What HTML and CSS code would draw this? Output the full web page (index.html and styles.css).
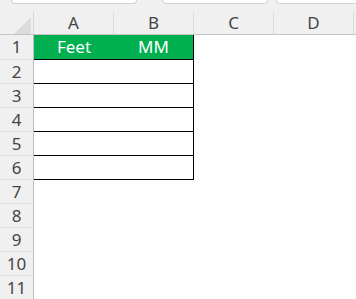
FILE: index.html
```html
<!DOCTYPE html>
<html>
<head>
<meta charset="utf-8">
<link rel="stylesheet" href="styles.css">
</head>
<body>
<div class="tabs">
  <div class="tab t1"></div>
  <div class="tab t2"></div>
  <div class="tab t3"></div>
</div>
<div class="sheet">
  <div class="corner"><span class="tri"></span></div>
  <div class="ch">A</div>
  <div class="ch">B</div>
  <div class="ch">C</div>
  <div class="ch">D</div>
  <div class="ch end"></div>

  <div class="rh r1">1</div>
  <div class="c hd">Feet</div>
  <div class="c hd right">MM</div>
  <div class="c blank span3"></div>

  <div class="rh">2</div><div class="c tb"></div><div class="c tb right"></div><div class="c blank span3"></div>
  <div class="rh">3</div><div class="c tb"></div><div class="c tb right"></div><div class="c blank span3"></div>
  <div class="rh">4</div><div class="c tb"></div><div class="c tb right"></div><div class="c blank span3"></div>
  <div class="rh">5</div><div class="c tb"></div><div class="c tb right"></div><div class="c blank span3"></div>
  <div class="rh">6</div><div class="c tb"></div><div class="c tb right"></div><div class="c blank span3"></div>
  <div class="rh">7</div><div class="c blank span5"></div>
  <div class="rh">8</div><div class="c blank span5"></div>
  <div class="rh">9</div><div class="c blank span5"></div>
  <div class="rh">10</div><div class="c blank span5"></div>
  <div class="rh">11</div><div class="c blank span5"></div>
</div>
</body>
</html>
```
FILE: styles.css
```css
html, body {
  margin: 0;
  padding: 0;
  background: #ffffff;
  width: 356px;
  height: 299px;
  overflow: hidden;
  font-family: "Noto Sans", "Open Sans", sans-serif;
}
.tabs {
  height: 12px;
  background: #f0f0f0;
  display: flex;
  align-items: flex-start;
}
.tab {
  box-sizing: border-box;
  height: 4px;
  background: #ffffff;
  border: 1px solid #d2d2d2;
  border-top: none;
  border-radius: 0 0 5px 5px;
}
.t1 { margin-left: 11px; width: 126px; }
.t2 { margin-left: 25px; width: 106px; }
.t3 { margin-left: 8px; flex: 1; margin-right: -6px; }

.sheet {
  display: grid;
  grid-template-columns: 34px 80px 80px 80px 80px 1fr;
  grid-template-rows: 23px 25px repeat(10, 24px);
}
.corner {
  box-sizing: border-box;
  background: #f0f0f0;
  border-right: 1px solid #d6d6d6;
  border-bottom: 1px solid #c4c4c4;
  position: relative;
}
.tri {
  position: absolute;
  left: 14px;
  top: 5px;
  width: 0;
  height: 0;
  border-left: 17px solid transparent;
  border-bottom: 17px solid #dcdcdc;
}
.ch {
  box-sizing: border-box;
  background: #f0f0f0;
  border-right: 1px solid #dadada;
  border-bottom: 1px solid #c4c4c4;
  color: #444444;
  font-size: 17px;
  line-height: 22px;
  text-align: center;
}
.ch.end { border-right: none; }
.rh {
  box-sizing: border-box;
  background: #f0f0f0;
  border-right: 1px solid #bdbdbd;
  border-bottom: 1px solid #dadada;
  color: #444444;
  font-size: 17px;
  line-height: 23px;
  text-align: center;
}
.rh.r1 { line-height: 24px; }
.c { box-sizing: border-box; background: #ffffff; }
.hd {
  background: #00b050;
  color: #ffffff;
  font-size: 17px;
  line-height: 24px;
  text-align: center;
  border-bottom: 1px solid #000000;
}
.tb { border-bottom: 1px solid #000000; }
.right { border-right: 1px solid #000000; }
.span3 { grid-column: span 3; }
.span5 { grid-column: span 5; }
```
